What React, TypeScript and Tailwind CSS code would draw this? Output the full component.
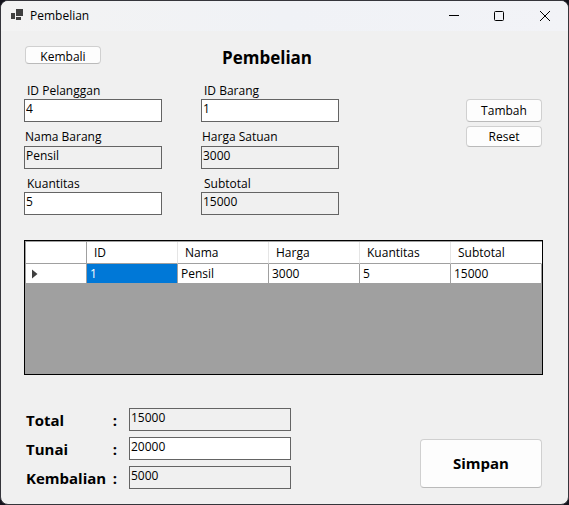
import type { InputHTMLAttributes, ReactNode } from "react";

const fieldBase =
  "block h-[23px] w-full min-w-0 rounded-none border border-[#646464] pl-px pb-[5px] text-xs leading-4 text-black outline-none";

function TextBox({ readOnly, ...rest }: InputHTMLAttributes<HTMLInputElement>) {
  return (
    <input
      type="text"
      readOnly={readOnly}
      className={`${fieldBase} ${readOnly ? "bg-[#f0f0f0]" : "bg-white"}`}
      {...rest}
    />
  );
}

type FieldProps = { id: string; label: string; value: string; readOnly?: boolean; raised?: boolean };

function Field({ id, label, value, readOnly, raised }: FieldProps) {
  return (
    <div>
      <label htmlFor={id} className={`block text-xs leading-4 ${raised ? "pb-px pl-px" : "pl-[3px]"}`}>
        {label}
      </label>
      <TextBox id={id} defaultValue={value} readOnly={readOnly} />
    </div>
  );
}

function TotalRow({ id, label, value, readOnly }: FieldProps) {
  return (
    <div className="flex items-center">
      <label htmlFor={id} className="flex w-[105px] shrink-0 justify-between pl-0.5 pr-3 text-[15px] leading-5 font-bold">
        <span>{label}</span>
        <span>:</span>
      </label>
      <TextBox id={id} defaultValue={value} readOnly={readOnly} />
    </div>
  );
}

function Button({ className, children }: { className: string; children: ReactNode }) {
  return (
    <button
      type="button"
      className={`flex items-center justify-center rounded-[4px] border border-[#d0d0d0] border-b-[#bababa] bg-[#fdfdfd] ${className}`}
    >
      {children}
    </button>
  );
}

const columns = ["ID", "Nama", "Harga", "Kuantitas", "Subtotal"];
const rows = [["1", "Pensil", "3000", "5", "15000"]];

function TitleBar() {
  return (
    <header className="flex h-[30px] items-center bg-linear-to-r from-[#f3f3f3] via-[#f0f2f6] to-[#f2f3f7] pl-2.5">
      <svg width="12" height="14" viewBox="0 0 12 14" fill="#3f3f3f" shapeRendering="crispEdges" aria-hidden="true">
        <rect x="5" y="0" width="7" height="7" />
        <rect x="0" y="4" width="4" height="6" />
        <rect x="5" y="8" width="5" height="3" />
      </svg>
      <span className="pl-[7px] text-xs">Pembelian</span>
      <div className="ml-auto flex h-full">
        <button type="button" aria-label="Minimize" className="flex w-[45px] items-center justify-center">
          <svg width="10" height="10" viewBox="0 0 10 10" stroke="#000">
            <path d="M0 4.5H10" />
          </svg>
        </button>
        <button type="button" aria-label="Maximize" className="flex w-[46px] items-center justify-center">
          <svg width="10" height="10" viewBox="0 0 10 10" fill="none" stroke="#000">
            <rect x="0.5" y="0.5" width="9" height="9" rx="1" />
          </svg>
        </button>
        <button type="button" aria-label="Close" className="flex w-[46px] items-center justify-center">
          <svg width="10" height="10" viewBox="0 0 10 10" stroke="#000">
            <path d="M0 0L10 10M10 0L0 10" />
          </svg>
        </button>
      </div>
    </header>
  );
}

function ItemGrid() {
  return (
    <div className="mt-[25px] min-h-[135px] border border-black bg-[#a0a0a0] pt-px pl-px">
      <table className="w-full table-fixed border-separate border-spacing-0 text-left text-xs leading-4">
        <thead>
          <tr className="h-[22px] bg-white">
            <th className="w-[61px] border-r border-b border-[#a0a0a0] p-0" />
            {columns.map((name) => (
              <th
                key={name}
                scope="col"
                className="border-r border-b border-r-[#e5e5e5] border-b-[#a0a0a0] p-0 pl-[7px] font-normal last:border-r-white"
              >
                {name}
              </th>
            ))}
          </tr>
        </thead>
        <tbody>
          {rows.map((cells) => (
            <tr key={cells[0]} className="h-5 bg-white">
              <th scope="row" className="border-r border-b border-[#a0a0a0] p-0 pl-1.5">
                <svg width="6" height="10" viewBox="0 0 6 10" fill="#3f3f3f" aria-label="Current row">
                  <path d="M0 0.5L5.5 5L0 9.5Z" />
                </svg>
              </th>
              {cells.map((cell, i) => (
                <td
                  key={columns[i]}
                  className={`border-r border-b border-[#a0a0a0] p-0 pl-[3px] ${i === 0 ? "bg-[#0078d7] text-white" : ""}`}
                >
                  {cell}
                </td>
              ))}
            </tr>
          ))}
        </tbody>
      </table>
    </div>
  );
}

export default function App() {
  return (
    <div className="flex min-h-screen bg-[#14131c] font-['Open_Sans','Noto_Sans',sans-serif] text-black">
      <div className="w-full overflow-hidden rounded-lg border border-[#35353b] bg-[#f0f0f0]">
        <TitleBar />
        <main className="pt-[15px] pr-[25px] pb-3.5 pl-[23px]">
          <div className="grid grid-cols-[138px_138px_1fr] gap-x-[39px]">
            <Button className="ml-px h-[18px] w-[76px] pt-1 text-xs">Kembali</Button>
            <h1 className="pl-[21px] text-[17px] leading-6 font-bold">Pembelian</h1>
          </div>
          <div className="mt-[13px] flex justify-between">
            <div className="grid grid-cols-[138px_138px] gap-x-[39px] gap-y-[7px]">
              <Field id="id-pelanggan" label="ID Pelanggan" value="4" />
              <Field id="id-barang" label="ID Barang" value="1" />
              <Field id="nama-barang" label="Nama Barang" value="Pensil" readOnly raised />
              <Field id="harga-satuan" label="Harga Satuan" value="3000" readOnly raised />
              <Field id="kuantitas" label="Kuantitas" value="5" />
              <Field id="subtotal" label="Subtotal" value="15000" readOnly />
            </div>
            <div className="flex flex-col gap-1 pt-4 pr-px">
              <Button className="h-[23px] w-[76px] text-xs">Tambah</Button>
              <Button className="h-[21px] w-[76px] text-xs">Reset</Button>
            </div>
          </div>
          <ItemGrid />
          <div className="mt-[33px] flex items-end justify-between pr-px">
            <div className="flex w-[267px] flex-col gap-1.5">
              <TotalRow id="total" label="Total" value="15000" readOnly />
              <TotalRow id="tunai" label="Tunai" value="20000" />
              <TotalRow id="kembalian" label="Kembalian" value="5000" readOnly />
            </div>
            <Button className="mb-px h-[49px] w-[122px] text-[15px] font-bold">Simpan</Button>
          </div>
        </main>
      </div>
    </div>
  );
}
